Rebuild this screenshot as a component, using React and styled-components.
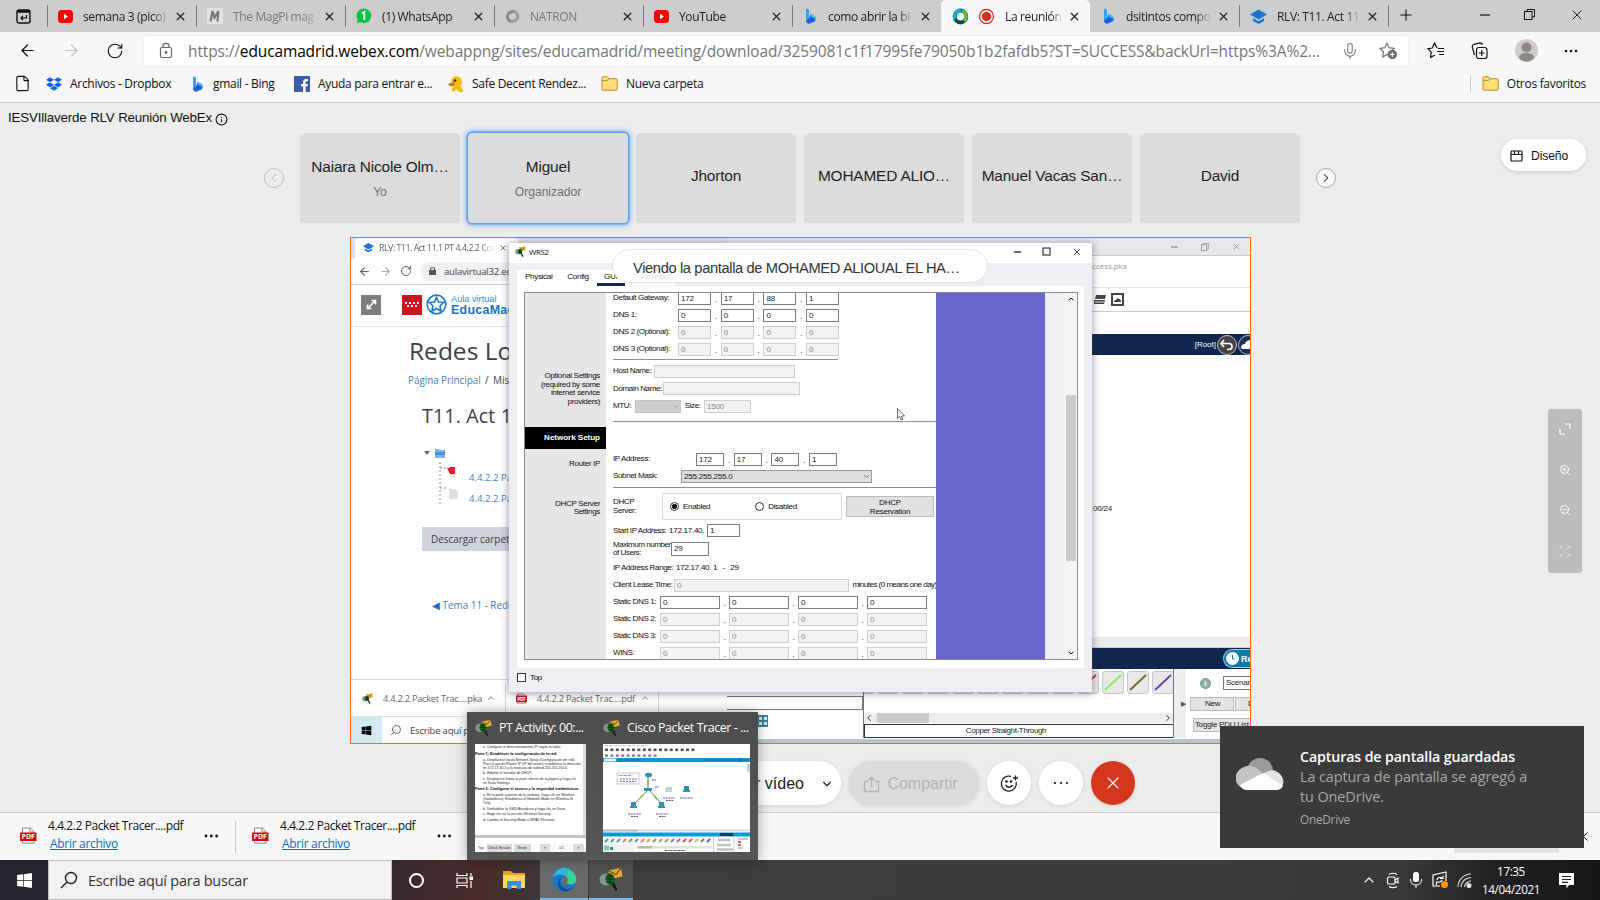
import React from "react";
import styled, { createGlobalStyle } from "styled-components";
import { FaDropbox, FaWindows, FaFacebookF } from "react-icons/fa";
import {
  ArrowLeft, ArrowRight, RotateCw, X, Plus, Mic, Search, ChevronDown, ChevronUp,
  ChevronLeft, ChevronRight, File, ZoomIn, ZoomOut, Info,
} from "lucide-react";

const ui = '"Open Sans", "Noto Sans", sans-serif';
const arial = '"Liberation Sans", Arial, sans-serif';

const Global = createGlobalStyle`
  * { box-sizing: border-box; }
  html, body { margin: 0; padding: 0; overflow: hidden; }
  body { width: 1600px; height: 900px; font-family: ${ui}; color: #111; }
  svg { display: block; flex: none; }
`;

const Screen = styled.div`
  position: relative;
  display: flex;
  flex-direction: column;
  width: 1600px;
  height: 900px;
  overflow: hidden;
  background: #ececec;
`;

/* ---------- browser frame ---------- */

const TabBar = styled.div`
  display: flex;
  height: 32px;
  background: #cdcdcd;
  flex: none;
`;
const TabMenu = styled.div`
  display: flex;
  width: 47px;
  align-items: center;
  justify-content: center;
`;
const TabBox = styled.div`
  display: flex;
  align-items: center;
  width: 149px;
  height: 32px;
  padding: 0 9px 0 10px;
  font-size: 12px;
  letter-spacing: -0.36px;
  color: ${(p) => (p.$dim ? "#777" : "#1b1b1b")};
  background: ${(p) => (p.$active ? "#f7f7f7" : "transparent")};
  border-radius: ${(p) => (p.$active ? "5px 5px 0 0" : "0")};
  border-left: 1px solid ${(p) => (p.$line ? "#777" : "transparent")};
  border-image: ${(p) => (p.$line ? "linear-gradient(transparent 19%, #777 19%, #777 82%, transparent 82%) 1" : "none")};
`;
const TabLabel = styled.span`
  flex: 1;
  margin: 0 5px 0 10px;
  white-space: nowrap;
  overflow: hidden;
  mask-image: linear-gradient(90deg, #000 80%, transparent 100%);
`;
const IconPair = styled.div`
  display: flex;
  gap: 9px;
`;
const WindowButtons = styled.div`
  display: flex;
  flex: 1;
  align-items: center;
  justify-content: space-between;
  padding: 0 15px 3px 8px;
  border-left: 1px solid transparent;
  border-image: linear-gradient(transparent 19%, #777 19%, #777 82%, transparent 82%) 1;
`;
const WindowControls = styled.div`
  display: flex;
  gap: 34px;
  align-items: center;
`;

const Toolbar = styled.div`
  display: flex;
  align-items: center;
  height: 37px;
  padding: 0 22px 0 18px;
  background: #f7f7f7;
  flex: none;
`;
const NavIcons = styled.div`
  display: flex;
  align-items: center;
  gap: 25px;
  width: 126px;
`;
const AddressBox = styled.div`
  display: flex;
  align-items: center;
  width: 1264px;
  height: 30px;
  padding: 0 10px 0 14px;
  background: #fff;
  border-radius: 4px;
  box-shadow: 0 0 3px #e2e2e2;
`;
const Url = styled.div`
  flex: 1;
  margin-left: 14px;
  font-size: 15.5px;
  letter-spacing: -0.13px;
  color: #767676;
  white-space: nowrap;
  b { font-weight: 400; color: #000; }
`;
const AddressIcons = styled.div`
  display: flex;
  gap: 20px;
  align-items: center;
`;
const ToolbarIcons = styled.div`
  display: flex;
  flex: 1;
  align-items: center;
  justify-content: space-between;
  padding-left: 19px;
`;

const Bookmarks = styled.div`
  display: flex;
  align-items: center;
  height: 34px;
  padding: 0 14px 4px 14px;
  background: #f7f7f7;
  border-bottom: 1px solid #cbcbcb;
  flex: none;
`;
const Bookmark = styled.div`
  display: flex;
  align-items: center;
  gap: 8px;
  width: ${(p) => p.$w}px;
  font-size: 12px;
  letter-spacing: -0.3px;
  white-space: nowrap;
`;
const OtherBookmarks = styled(Bookmark)`
  margin-left: auto;
  padding-left: 11px;
  border-left: 1px solid #c6c6c6;
`;

/* ---------- meeting page ---------- */

const Meeting = styled.main`
  display: flex;
  flex-direction: column;
  align-items: center;
  height: 709px;
  font-family: ${arial};
  flex: none;
`;
const MeetingTitle = styled.div`
  display: flex;
  align-items: center;
  gap: 3px;
  align-self: flex-start;
  height: 30px;
  padding: 0 0 1px 8px;
  font-size: 13.3px;
  letter-spacing: -0.15px;
  svg { margin-top: 3px; }
`;
const Strip = styled.div`
  display: flex;
  align-items: center;
  gap: 8px;
  height: 90px;
`;
const Card = styled.div`
  display: flex;
  flex-direction: column;
  align-items: center;
  justify-content: center;
  gap: 9px;
  width: 160px;
  height: 90px;
  padding-bottom: ${(p) => (p.$sub ? 0 : 5)}px;
  font-size: 15.4px;
  letter-spacing: -0.16px;
  color: #222;
  background: #dcdcdc;
  border-radius: 4px;
  box-shadow: ${(p) => (p.$active ? "0 0 0 1.5px #5aa2f8, 0 0 5px 2px #6eaefa" : "none")};
  small { font-size: 12.2px; letter-spacing: -0.05px; color: #6e6e6e; }
`;
const RoundArrow = styled.div`
  display: flex;
  align-items: center;
  justify-content: center;
  width: 20px;
  height: 20px;
  margin: 0 8px;
  border: 1px solid ${(p) => (p.$off ? "#c4c4c4" : "#aaa")};
  border-radius: 50%;
  color: ${(p) => (p.$off ? "#b4b4b4" : "#222")};
  background: ${(p) => (p.$off ? "transparent" : "#f8f8f8")};
`;
const LayoutButton = styled.div`
  position: absolute;
  left: 1501px;
  top: 139px;
  display: flex;
  align-items: center;
  gap: 8px;
  width: 85px;
  height: 32px;
  padding: 2px 0 0 9px;
  font: 12.2px ${arial};
  letter-spacing: -0.15px;
  background: #fff;
  border-radius: 16px;
  box-shadow: 0 1px 4px #ccc;
`;
const ZoomPanel = styled.div`
  position: absolute;
  left: 1548px;
  top: 409px;
  display: flex;
  flex-direction: column;
  align-items: center;
  justify-content: space-around;
  width: 34px;
  height: 164px;
  padding-bottom: 2px;
  color: #fff;
  background: #bcbcbc;
  border-radius: 3px;
`;

const Controls = styled.div`
  display: flex;
  gap: 8px;
  width: 670px;
  margin: 17px 0 0 466px;
  align-self: flex-start;
`;
const Pill = styled.div`
  display: flex;
  align-items: center;
  justify-content: ${(p) => (p.$end ? "flex-end" : "center")};
  gap: ${(p) => (p.$end ? 16 : 7)}px;
  width: ${(p) => p.$w}px;
  height: 44px;
  padding: ${(p) => (p.$w > 44 ? "2px 7px 0 0" : "0")};
  font-size: 16px;
  color: ${(p) => p.$fg || "#222"};
  background: ${(p) => p.$bg || "#fff"};
  border-radius: 22px;
  box-shadow: 0 1px 4px #d4d4d4;
`;

/* ---------- shared screen ---------- */

const SharedScreen = styled.div`
  position: relative;
  width: 901px;
  height: 507px;
  margin: 14px 0 0 350px;
  align-self: flex-start;
  border: 1px solid #f26a24;
  background: #b9c3d3;
  overflow: hidden;
  font-family: ${ui};
`;
const RemoteBrowser = styled.div`
  position: absolute;
  left: 0;
  top: 0;
  display: flex;
  flex-direction: column;
  width: 376px;
  height: 505px;
  background: #fefefe;
`;
const RTabs = styled.div`
  display: flex;
  height: 21px;
  background: #dee1e7;
`;
const RTab = styled.div`
  display: flex;
  align-items: center;
  gap: 5px;
  width: 163px;
  margin-left: 4px;
  padding: 0 0 2px 8px;
  font-size: 8.8px;
  letter-spacing: -0.46px;
  color: #5f6368;
  background: #fff;
  white-space: nowrap;
  border-radius: 4px 4px 0 0;
`;
const RTabLabel = styled.span`
  width: 115px;
  overflow: hidden;
  mask-image: linear-gradient(90deg, #000 88%, transparent);
`;
const RBar = styled.div`
  display: flex;
  align-items: center;
  gap: 8px;
  height: 26px;
  padding: 0 0 1px 7px;
  color: #5c5f63;
  border-bottom: 1px solid #ccc;
`;
const RUrl = styled.div`
  display: flex;
  align-items: center;
  gap: 8px;
  height: 19px;
  flex: 1;
  padding-left: 9px;
  font-size: 9.6px;
  letter-spacing: -0.24px;
  color: #444;
  background: #eff1f4;
  border-radius: 10px 0 0 10px;
`;
const RHeader = styled.div`
  display: flex;
  align-items: center;
  height: 42px;
  padding: 0 0 2px 10px;
  border-bottom: 1px solid #e2e2e2;
`;
const Expand = styled.div`
  display: flex;
  align-items: center;
  justify-content: center;
  width: 20px;
  height: 20px;
  margin-right: 21px;
  background: #7f7c81;
`;
const RedFlag = styled.div`
  display: flex;
  align-items: center;
  justify-content: center;
  width: 20px;
  height: 20px;
  margin-right: 4px;
  background: #cf1020;
`;
const Brand = styled.div`
  margin-left: 4px;
  font-family: ${arial};
  font-size: 9.2px;
  line-height: 11px;
  color: #3a8ad2;
  b { display: block; font-size: 12.4px; color: #1d70c2; font-weight: 900; letter-spacing: 0.3px; }
`;
const RPage = styled.div`
  display: flex;
  flex-direction: column;
  flex: 1;
  color: #3d4044;
  white-space: nowrap;
  h1 { margin: 7px 0 0 58px; font-size: 24.5px; line-height: 34px; font-weight: 400; }
  h2 { margin: 13px 0 0 71px; font-size: 19.5px; line-height: 28px; font-weight: 400; letter-spacing: 0.2px; }
`;
const Crumbs = styled.div`
  margin: 3px 0 0 57px;
  font-size: 9.9px;
  line-height: 18px;
  word-spacing: -0.4px;
  span { color: #4a7fb9; }
`;
const Tree = styled.div`
  display: grid;
  grid-template-columns: 46px 1fr;
  align-items: center;
  height: 66px;
  margin: 14px 0 0 72px;
  font-size: 9.6px;
  color: #4a7fb9;
`;
const TreeLinks = styled.div`
  display: grid;
  gap: 7px;
  line-height: 14px;
  padding-top: 22px;
`;
const Descargar = styled.div`
  height: 24px;
  width: 120px;
  margin: 17px 0 0 71px;
  padding-left: 9px;
  font-size: 9.9px;
  line-height: 24px;
  background: #ced3dd;
`;
const Prev = styled.div`
  margin: 46px 0 0 81px;
  font-size: 9.9px;
  line-height: 16px;
  color: #4a7fb9;
  i { font-style: normal; color: #1270c8; }
`;
const RDownloads = styled.div`
  display: flex;
  align-items: center;
  height: 37px;
  font-size: 9.2px;
  letter-spacing: -0.22px;
  color: #666;
  white-space: nowrap;
  border-top: 1px solid #d9d9d9;
`;
const RDownload = styled.div`
  display: flex;
  align-items: center;
  gap: 10px;
  width: ${(p) => p.$w}px;
  height: 28px;
  padding-left: ${(p) => p.$pl}px;
  border-right: 1px solid #d4d4d4;
  span { width: 93px; }
`;
const RTaskbar = styled.div`
  display: flex;
  align-items: center;
  height: 27px;
  gap: 8px;
  font-size: 9.6px;
  letter-spacing: -0.25px;
  color: #444;
  border-top: 1px solid #ddd;
  background: #fdfdfd;
`;
const FlippedSearch = styled(Search)`
  transform: scaleX(-1);
`;
const RStart = styled.div`
  display: flex;
  align-items: center;
  justify-content: center;
  width: 31px;
  height: 26px;
  color: #000;
  background: #d3e8f2;
`;

/* packet tracer window */
const Tracer = styled.div`
  position: absolute;
  left: 376px;
  top: 0;
  display: flex;
  flex-direction: column;
  width: 524px;
  height: 501px;
  background: #fefefe;
  font: 8px ${arial};
`;
const TRow = styled.div`
  display: flex;
  align-items: center;
  justify-content: flex-end;
  height: ${(p) => p.$h}px;
  padding-right: ${(p) => p.$pr || 0}px;
  gap: ${(p) => p.$gap || 0}px;
  color: ${(p) => p.$fg || "#333"};
  background: ${(p) => p.$bg || "#fefefe"};
  border-bottom: ${(p) => (p.$line ? "1px solid #c9c9c9" : "0")};
  flex: none;
`;
const TFile = styled.div`
  height: 32px;
  padding: 4px 0 0 361px;
  font: 8px ${ui};
  letter-spacing: -0.1px;
  color: #999;
  border-bottom: 1px solid #e2e2e2;
`;
const TCanvas = styled.div`
  height: 282px;
  padding: 149px 0 0 366px;
  color: #222;
  letter-spacing: -0.2px;
`;
const RealTime = styled.div`
  display: flex;
  align-items: center;
  gap: 2px;
  width: 28px;
  height: 19px;
  padding-left: 2px;
  overflow: hidden;
  font-weight: 700;
  font-size: 9px;
  color: #fff;
  background: #0d7cab;
  border: 1px solid #9bd0e6;
  border-right: 0;
  border-radius: 10px 0 0 10px;
`;
const TBottom = styled.div`
  display: flex;
  height: 69px;
  background: #f2f2f4;
  flex: none;
`;
const DeviceCol = styled.div`
  display: flex;
  flex-direction: column;
  width: 137px;
  border-right: 1px solid #777;
  background: #fff;
`;
const DeviceBox = styled.div`
  height: 14px;
  margin-top: 27px;
  border: 1px solid #777;
  border-left: 0;
`;
const TealTile = styled.div`
  display: grid;
  grid-template-columns: 3px 3px;
  gap: 2px;
  align-content: center;
  justify-content: center;
  width: 11px;
  height: 12px;
  margin: 5px 0 0 30px;
  background: #3b8596;
  i { width: 3px; height: 3px; background: #d7eef2; }
`;
const CableCol = styled.div`
  display: flex;
  flex-direction: column;
  width: 310px;
  background: #fff;
  border-right: 1px solid #777;
`;
const Cables = styled.div`
  display: flex;
  gap: 3px;
  height: 44px;
  padding-top: 2px;
  overflow: hidden;
  > :first-child { margin-left: -12px; }
`;
const Cable = styled.div`
  width: 22px;
  height: 23px;
  flex: none;
  border: 1px solid #c6c6c6;
  border-radius: 3px;
  background: #e8e8ea;
`;
const CableScroll = styled.div`
  display: flex;
  align-items: center;
  justify-content: space-between;
  height: 10px;
  margin-top: 1px;
  background: #ededee;
`;
const Thumb = styled.div`
  width: 52px;
  height: 10px;
  background: #c9c9cb;
  margin-right: auto;
  margin-left: 3px;
`;
const CableName = styled.div`
  height: 14px;
  margin-top: 1px;
  line-height: 12px;
  text-align: center;
  letter-spacing: -0.35px;
  padding-right: 26px;
  color: #222;
  border: 1px solid #333;
  border-right: 0;
`;
const Splitter = styled.div`
  display: flex;
  align-items: center;
  justify-content: flex-end;
  width: 12px;
  font-size: 7px;
  color: #555;
  background: #eee;
`;
const Scenario = styled.div`
  flex: 1;
  display: flex;
  flex-direction: column;
  gap: 7px;
  padding: 7px 0 0 4px;
  overflow: hidden;
  background: #fff;
  white-space: nowrap;
  letter-spacing: -0.25px;
`;
const ScenRow = styled.div`
  display: flex;
  align-items: center;
  gap: ${(p) => p.$gap || 1}px;
  padding-left: ${(p) => p.$pl || 0}px;
`;
const ScenButton = styled.div`
  width: ${(p) => p.$w}px;
  height: 14px;
  line-height: 12px;
  padding-left: ${(p) => p.$pl}px;
  flex: none;
  color: #222;
  background: ${(p) => p.$bg || "#e4e4e6"};
  border: 1px solid ${(p) => (p.$bg ? "#777" : "#bbb")};
`;

/* router window */
const Router = styled.div`
  position: absolute;
  left: 158px;
  top: 5px;
  display: flex;
  flex-direction: column;
  width: 583px;
  height: 449px;
  background: #f0eef2;
  box-shadow: 0 1px 7px 1px rgba(60, 60, 80, 0.45);
  font: 8.1px ${arial};
  letter-spacing: -0.42px;
`;
const RouterTitle = styled.div`
  display: flex;
  align-items: center;
  gap: 3px;
  height: 20px;
  padding: 0 10px 3px 6px;
  background: #fff;
  font-family: ${ui};
  font-size: 8px;
`;
const RouterButtons = styled.div`
  display: flex;
  align-items: center;
  gap: 21px;
  margin-left: auto;
`;
const RouterTabs = styled.div`
  display: flex;
  align-items: flex-end;
  gap: 15px;
  width: 158px;
  height: 16px;
  margin: 7px 0 0 8px;
  padding-left: 8px;
  background: #fff;
  line-height: 14px;
  letter-spacing: -0.35px;
  span { height: 16px; }
`;
const GuiTab = styled.span`
  width: 28px;
  margin-left: -7px;
  text-align: center;
  border-bottom: 3px solid #14264f;
`;
const RouterPanel = styled.div`
  display: flex;
  height: 382px;
  margin: 0 8px;
  padding: 6px 6px 8px 7px;
  background: #fff;
`;
const GuiFrame = styled.div`
  display: flex;
  width: 554px;
  height: 368px;
  border: 1px solid #8d8d90;
  overflow: hidden;
`;
const Side = styled.div`
  width: 81px;
  text-align: right;
  line-height: 8.7px;
  letter-spacing: -0.36px;
  background: #e6e6e9;
  flex: none;
`;
const SideNote = styled.div`
  padding: 0 6px 0 0;
  margin-top: ${(p) => p.$mt}px;
  white-space: pre-line;
`;
const SideBand = styled.div`
  height: 22px;
  margin-top: 20px;
  padding-right: 6px;
  font-weight: 700;
  line-height: 22px;
  letter-spacing: -0.06px;
  color: #fff;
  background: #000;
`;
const Form = styled.div`
  width: 330px;
  margin-top: -3px;
  padding-left: 7px;
  background: #fefefe;
  flex: none;
  white-space: nowrap;
`;
const Purple = styled.div`
  width: 109px;
  background: #6866cc;
  flex: none;
`;
const Gutter = styled.div`
  flex: 1;
  background: #f0eef0;
`;
const ScrollCol = styled.div`
  display: flex;
  flex-direction: column;
  align-items: center;
  width: 13px;
  padding: 2px 0;
  background: #f4f3f5;
  i { width: 10px; height: 166px; margin: 92px 0 auto 0; background: #cbcbcd; }
`;
const Row = styled.div`
  display: flex;
  align-items: center;
  height: ${(p) => p.$h || 17}px;
`;
const Label = styled.div`
  width: ${(p) => p.$w}px;
  flex: none;
  line-height: 8.5px;
  white-space: pre;
  letter-spacing: ${(p) => p.$ls || -0.42}px;
`;
const Field = styled.div`
  width: ${(p) => p.$w}px;
  height: ${(p) => p.$h || 13}px;
  padding-left: 2px;
  line-height: 11px;
  flex: none;
  letter-spacing: -0.25px;
  color: ${(p) => (p.$off ? "#8a8a8a" : "#222")};
  background: ${(p) => (p.$off ? "#f2f1f3" : "#fff")};
  border: 1px solid ${(p) => (p.$off ? "#cfcfd1" : "#7b7b7e")};
`;
const Dot = styled.div`
  width: ${(p) => p.$w}px;
  padding-top: 2px;
  text-align: center;
`;
const Select = styled(Field)`
  display: flex;
  align-items: center;
  justify-content: space-between;
  background: ${(p) => (p.$off ? "#cdcdd0" : "#dededf")};
  border-color: ${(p) => (p.$off ? "#c4c4c6" : "#999")};
`;
const Rule = styled.div`
  width: ${(p) => p.$w}px;
  height: 1px;
  margin: ${(p) => p.$m};
  background: #8f8f91;
`;
const RadioBox = styled.div`
  display: flex;
  align-items: center;
  gap: 4px;
  width: 180px;
  height: 27px;
  padding-left: 7px;
  margin-right: 4px;
  border: 1px solid #dcdcdc;
  letter-spacing: -0.36px;
`;
const Radio = styled.div`
  width: 9px;
  height: 9px;
  margin-left: ${(p) => p.$ml || 0}px;
  border: 1px solid #333;
  border-radius: 50%;
  background: ${(p) => (p.$on ? "radial-gradient(#111 0 2.2px, #fff 3px)" : "#fff")};
`;
const Reserve = styled.div`
  width: 88px;
  height: 21px;
  text-align: center;
  line-height: 9px;
  padding-top: 1px;
  letter-spacing: -0.26px;
  border: 1px solid #bbb;
  background: #e1e1e3;
`;
const RouterFoot = styled.div`
  display: flex;
  align-items: center;
  gap: 4px;
  height: 24px;
  padding: 0 0 6px 8px;
  i { width: 9px; height: 9px; border: 1px solid #333; background: #fff; }
`;
const Viewing = styled.div`
  position: absolute;
  left: 261px;
  top: 11px;
  width: 376px;
  height: 34px;
  padding-left: 20px;
  font: 14.7px/36px ${arial};
  letter-spacing: -0.37px;
  color: #333;
  white-space: nowrap;
  background: rgba(255, 255, 255, 0.88);
  border: 1px solid #e2e2e2;
  border-radius: 17px;
`;
const Pointer = styled.div`
  position: absolute;
  left: 546px;
  top: 170px;
`;

/* ---------- downloads and taskbar ---------- */

const Downloads = styled.div`
  display: flex;
  align-items: center;
  height: 48px;
  background: #f7f7f7;
  border-top: 1px solid #c9c9c9;
  flex: none;
`;
const Download = styled.div`
  display: flex;
  align-items: center;
  width: ${(p) => (p.$line ? 236 : 232)}px;
  height: 32px;
  padding: 0 16px 2px ${(p) => (p.$line ? 20 : 16)}px;
  border-right: ${(p) => (p.$line ? "1px solid #c6c6c6" : "0")};
`;
const DownloadText = styled.div`
  flex: 1;
  margin: -1px 0 0 11px;
  font-size: 12px;
  line-height: 18px;
  letter-spacing: -0.42px;
  white-space: nowrap;
  a { display: block; margin-left: 2px; letter-spacing: -0.3px; color: #1068bf; text-decoration: underline; }
`;
const ShowAll = styled.div`
  width: 105px;
  height: 32px;
  margin-left: auto;
  background: #e2e2e2;
`;
const CloseCell = styled.div`
  padding: 0 9px 0 17px;
`;
const Taskbar = styled.div`
  display: flex;
  height: 40px;
  color: #fff;
  background: linear-gradient(90deg, #262330 0, #262330 48px, #38292e 392px, #4b2b2b 480px, #3f3536 530px, #3d3d3d 640px, #3b3c3e 1100px, #39393b 1400px, #202022 1500px, #161617 1600px);
  flex: none;
`;
const TaskCell = styled.div`
  display: flex;
  align-items: center;
  justify-content: center;
  width: ${(p) => p.$w}px;
  height: 40px;
  background: ${(p) => p.$bg || "transparent"};
  border-bottom: ${(p) => (p.$bg ? "2px solid #76b9ed" : "0")};
  margin-right: ${(p) => p.$mr || 0}px;
`;
const SearchBox = styled.div`
  display: flex;
  align-items: center;
  gap: 10px;
  width: 344px;
  padding-left: 11px;
  font-size: 14.5px;
  letter-spacing: -0.25px;
  color: #333;
  background: #f1f1f1;
  border: 1px solid #bbb;
`;
const Tray = styled.div`
  display: flex;
  align-items: center;
  gap: 8px;
  margin-left: auto;
  padding-right: 25px;
`;
const Clock = styled.div`
  width: 62px;
  margin: 0 8px 0 0;
  text-align: center;
  font-size: 11.7px;
  line-height: 18px;
  letter-spacing: -0.4px;
`;

const Previews = styled.div`
  position: absolute;
  left: 467px;
  top: 712px;
  display: flex;
  gap: 17px;
  width: 291px;
  height: 148px;
  padding: 0 8px;
  background: linear-gradient(#4d4d4d, #565656);
  box-shadow: 0 0 12px rgba(0, 0, 0, 0.35);
`;
const Preview = styled.div`
  width: ${(p) => p.$w}px;
`;
const PreviewTitle = styled.div`
  display: flex;
  align-items: center;
  gap: 7px;
  height: 32px;
  padding-bottom: 1px;
  font-size: 12.5px;
  letter-spacing: -0.45px;
  color: #fff;
  white-space: nowrap;
`;
const ActivityDoc = styled.div`
  display: flex;
  flex-direction: column;
  width: 111px;
  height: 108px;
  overflow: hidden;
  background: #fff;
  font: 3.5px/4px ${arial};
  color: #222;
`;
const DocBody = styled.div`
  height: 91px;
  padding-top: 1px;
  overflow: hidden;
  border-right: 3px solid #dcdcdc;
  p { margin: 0 0 1.6px 8px; width: 98px; }
  b { display: block; margin: 2.5px 0 2px 0; font-size: 3.8px; color: #000; }
`;
const DocFoot = styled.div`
  display: flex;
  gap: 2px;
  align-items: center;
  height: 17px;
  padding: 6px 2px 1px;
  border-top: 3px solid #c4c4c4;
  white-space: nowrap;
`;
const DocButton = styled.span`
  width: ${(p) => p.$w}px;
  height: 8px;
  text-align: center;
  line-height: 8px;
  background: ${(p) => p.$bg || "#dcdcdc"};
  margin-left: ${(p) => p.$ml || 0}px;
`;

const Toast = styled.div`
  position: absolute;
  left: 1220px;
  top: 726px;
  display: flex;
  gap: 16px;
  width: 364px;
  height: 122px;
  padding: 20px 0 0 16px;
  background: #3a3a3a;
  color: #a9a9a9;
`;
const ToastText = styled.div`
  margin-top: 1px;
  font-size: 14.4px;
  line-height: 20px;
  letter-spacing: -0.07px;
  white-space: pre-line;
  b { display: block; font-weight: 600; font-size: 14.2px; letter-spacing: -0.11px; color: #fff; }
  small { display: block; margin-top: 3px; font-size: 11.8px; line-height: 18px; letter-spacing: -0.25px; }
`;
const ToastCloud = styled.div`
  padding-top: 12px;
`;

/* ---------- icons ---------- */

const YouTube = () => (
  <svg width="15" height="15" viewBox="0 0 15 15"><rect y="1" width="15" height="13" rx="3.500" fill="#f00" /><path d="M6 4.800v5.500l4-2.800z" fill="#fff" /></svg>
);
const Bing = () => (
  <svg width="15" height="16" viewBox="0 0 15 16"><path d="M3 .5l3 1v9.500l-3 3z" fill="#2aa7f5" /><path d="M3 12.500l3-2 1.500-4 3.500 1.500a3.500 3.500 0 0 1 .5 5.500L7 15.500a3 3 0 0 1-4-3z" fill="#1b62e0" /><path d="M6.800 5.500l4.500 2a3 3 0 0 1 1.300 3.500L8.500 9z" fill="#33c1f4" /></svg>
);
const WhatsAppTab = () => (
  <svg width="16" height="16" viewBox="0 0 16 16"><path d="M8 .5a7.300 7.300 0 1 1-3.600 13.700L.8 15.300l1-3.600A7.300 7.300 0 0 1 8 .5z" fill="#0cc143" /><path d="M6 5.500L8.300 4v8" stroke="#fff" strokeWidth="1.800" fill="none" /></svg>
);
const MagPi = () => (
  <svg width="16" height="16" viewBox="0 0 16 16"><rect width="16" height="16" fill="#e3e3e3" /><path d="M3.500 13.500L5.500 3l2 6.500L11.500 3l-1 10.500" stroke="#777" strokeWidth="2.200" fill="none" /></svg>
);
const Natron = () => (
  <svg width="15" height="15" viewBox="0 0 15 15" fill="none" stroke="#8b8b8b" strokeWidth="3"><path d="M6.500 12.500A5 5 0 0 1 4.500 3.500L9 1.800" /><path d="M8.500 2.500a5 5 0 0 1 2 9L6 13.200" stroke="#9d9d9d" /></svg>
);
const WebexMark = () => (
  <svg width="17" height="17" viewBox="0 0 17 17"><ellipse cx="8.500" cy="8.500" rx="5.700" ry="6" fill="#fff" stroke="#074d48" strokeWidth="4" /><path d="M3 11A6 6.200 0 0 1 9 2.300" stroke="#12b0e6" strokeWidth="3.400" fill="none" /><path d="M10 2.500a6 6.200 0 0 1 2 10.500" stroke="#64bb46" strokeWidth="3.400" fill="none" /></svg>
);
const Recording = () => (
  <svg width="17" height="17" viewBox="0 0 17 17"><circle cx="8.500" cy="8.500" r="7" fill="#fff" stroke="#d93025" strokeWidth="1.300" /><circle cx="8.500" cy="8.500" r="4.700" fill="#d93025" /></svg>
);
const Cap = ({ size = 17 }) => (
  <svg width={size} height={size} viewBox="0 0 17 17" fill="#1976d2"><path d="M8.500 1.500L17 6.500l-8.500 5L0 6.500z" /><path d="M3 10l5.500 3.200L14 10v3l-5.500 3L3 13z" /></svg>
);
const Folder = () => (
  <svg width="17" height="15" viewBox="0 0 17 15"><path d="M1 2q0-1.300 1.300-1.300h4l1.700 2h7q1.200 0 1.200 1.200v9q0 1.300-1.200 1.300H2.200Q1 14.200 1 13z" fill="#ffde7d" stroke="#b98d17" /><path d="M1 4.500h5l2-1.800" stroke="#b98d17" fill="none" /></svg>
);
const Duck = () => (
  <svg width="17" height="16" viewBox="0 0 17 16"><path d="M4.500 5.500C4 2 6.500.5 9.500.5s5.500 2 5.500 5.500c0 2.500-1.500 3-1.500 4.500 1.500 1 2.500 3 2.500 5.500h-4L9.500 13.500 6 15.800q-2-1.500-1-3.800l3-1.500z" fill="#f6b80c" /><path d="M1 8l5-2 2 2-1.500 2.500L2.500 10z" fill="#b9810f" /><circle cx="8" cy="4.500" r="1.300" fill="#222" /></svg>
);
const Pdf = () => (
  <svg width="17" height="17" viewBox="0 0 17 17"><path d="M2.500 16V1h8l3.500 3.500V16z" fill="#fff" stroke="#888" /><path d="M10 1v4h4" fill="none" stroke="#888" /><rect y="5.500" width="16.500" height="8.500" fill="#e3000f" /><text x="8.200" y="12.300" textAnchor="middle" fontFamily="Open Sans" fontWeight="700" fontSize="7" fill="#fff">PDF</text></svg>
);
const SmallPdf = () => (
  <svg width="11" height="11" viewBox="0 0 11 11"><path d="M1.500 10V1h6L9.500 3v7z" fill="#fff" stroke="#c55" /><rect y="2.500" width="11" height="6.500" fill="#c8102a" /><text x="5.500" y="7.500" textAnchor="middle" fontFamily="Open Sans" fontWeight="700" fontSize="4.800" fill="#fff">PDF</text></svg>
);
const TracerIcon = ({ size = 16 }) => (
  <svg width={size} height={size} viewBox="0 0 24 24"><ellipse cx="7" cy="12.500" rx="6.500" ry="6" fill="#8d908e" /><path d="M12 16l4.500 8 2-1-3.500-7.500z" fill="#151515" /><path d="M9 3.500L22 1l1.500 8.500-12 2.500z" fill="#e4ac35" /><path d="M9 3.500l8 4L22 1" stroke="#6b4b11" fill="none" strokeWidth="1.200" /><ellipse cx="11" cy="12" rx="4.500" ry="5.500" fill="#0a6d20" /><path d="M6.500 12h9M11 6.500v11M7.500 9h7M7.500 15h7" stroke="#04290b" strokeWidth="1" /></svg>
);
const CollectionIcon = () => (
  <svg width="17" height="18" viewBox="0 0 17 18" fill="none" stroke="#111" strokeWidth="1.200"><rect x="5.500" y="5.500" width="10.500" height="11" rx="2.500" /><path d="M3.500 13L1.200 5Q1 3 3 2.300L9 .8q2 0 2.600 2M10.700 8v6M7.700 11h6" /></svg>
);
const StarLines = () => (
  <svg width="18" height="17" viewBox="0 0 18 17" fill="none" stroke="#111" strokeWidth="1.200"><path d="M10 6L7.500 1 5.300 6 1 6.700l3.200 3.500L3.500 15.500 8 13M11 6.500h6M10 9.500h7M12 12.500h5" /></svg>
);
const StarPlus = () => (
  <svg width="19" height="18" viewBox="0 0 19 18"><path d="M8 1.200l2.100 4.500 5 .7-3.600 3.500.8 5L8 12.500 3.700 15l.8-5L1 6.400l5-.7z" fill="none" stroke="#767676" strokeWidth="1.200" /><circle cx="13.300" cy="12.500" r="4.700" fill="#6a6a6a" /><path d="M13.300 10v5M10.800 12.500h5" stroke="#fff" strokeWidth="1.200" /></svg>
);
const Avatar = () => (
  <svg width="23" height="23" viewBox="0 0 23 23"><circle cx="11.500" cy="11.500" r="11.500" fill="#cfcccb" /><circle cx="11.500" cy="8.500" r="5" fill="#8c8886" /><path d="M4 19q0-5 7.500-5t7.500 5q-3 3.500-7.500 3.500T4 19z" fill="#8c8886" /></svg>
);
const Dots = ({ color = "#111", gap = 5, r = 1.3 }) => (
  <svg width={gap * 2 + 4} height="4" viewBox={`0 0 ${gap * 2 + 4} 4`} fill={color}><circle cx="2" cy="2" r={r} /><circle cx={2 + gap} cy="2" r={r} /><circle cx={2 + gap * 2} cy="2" r={r} /></svg>
);
const Edge = () => (
  <svg width="25" height="25" viewBox="0 0 25 25"><circle cx="12.500" cy="12.500" r="12" fill="#1577cf" /><path d="M1 10A12 12 0 0 1 24.500 12c0 4-3 5.500-6 5.500-2.500 0-4-.8-3.500-2 2-5-2.500-8-7-8-3 0-5.500 1-7 2.500z" fill="#40cf94" /><path d="M1 10A12 12 0 0 1 17 1.500L15 10Q12 6.500 7 7.300 3 8 1 10z" fill="#30b8dc" /><path d="M10 10q-4 5 0 10 4 4 11 .5-3 4-8.500 4Q6 23 6 17q0-5 4-7z" fill="#0c4e9c" /><path d="M15 10.500q1.500 2-.5 5 0 2 4 2.500-7 3-9-2-1-4 2-6 2-1 3.500.5z" fill="#6b6b6b" /></svg>
);
const Explorer = () => (
  <svg width="22" height="20" viewBox="0 0 22 20"><path d="M0 1h8l2 2h12v15H0z" fill="#e3a51c" /><path d="M0 5h22v13H0z" fill="#fdd560" /><path d="M4 19v-8h14v8h-4.500v-3.500h-5V19z" fill="#3a8fd6" /></svg>
);
const Restore = ({ s = 11, c = "#111" }) => (
  <svg width={s} height={s} viewBox="0 0 11 11" fill="none" stroke={c}><rect x=".5" y="2.500" width="7.500" height="8" /><path d="M3 2.500v-2h7.500v7.500H8" /></svg>
);
const Dash = ({ w = 10, c = "#111" }) => (
  <svg width={w} height="2" viewBox={`0 0 ${w} 2`}><path d={`M0 1h${w}`} stroke={c} strokeWidth="1.200" /></svg>
);
const ShareIcon = () => (
  <svg width="17" height="17" viewBox="0 0 17 17" fill="none" stroke="#b4b4b4" strokeWidth="1.300"><path d="M5 5.500H1.500v10h14v-10H12M8.500 11V1.500M5.500 4.500l3-3 3 3" /></svg>
);
const OneDriveCloud = () => (
  <svg width="48" height="32" viewBox="0 0 48 32"><circle cx="24" cy="13" r="13" fill="#9b9b9b" /><path d="M11 31A11 11 0 0 1 6 10q10-6 19 4l13 17z" fill="#c3c3c3" /><path d="M27 16q10-8 18 1 5 7 0 13L26 17z" fill="#e3e3e3" /><path d="M4 27l23-12 20 13q-2 4-7 4H11q-5 0-7-5z" fill="#fff" /></svg>
);
const cableColors = ["#318ba0", "#318ba0", "#318ba0", "#e2762a", "#318ba0", "#318ba0", "#e2762a", "#e2a03a", "#777", "#888", "#e2762a", "#48a", "#d33", "#d33", "#d33", "#8d6", "#763", "#639"];
const Topology = () => (
  <svg width="147" height="108" viewBox="0 0 147 108">
    <rect width="147" height="108" fill="#fff" />
    <path d="M2 1.500h45" stroke="#bbb" strokeWidth=".8" strokeDasharray="3 1.500" />
    <g fill="#555">{Array.from({ length: 17 }, (_, i) => <rect key={i} x={2 + i * 5.4} y="4.500" width="3" height="2.600" />)}</g>
    <g fill="#687d92">{Array.from({ length: 10 }, (_, i) => <rect key={i} x={2 + i * 5.4} y="10.500" width="3" height="2.200" />)}</g>
    <rect y="14" width="147" height="4" fill="#0b9ad3" /><rect x="1" y="14.500" width="12" height="3" fill="#e8f6fb" /><path d="M102 16h43M16 16h22" stroke="#0b5f96" strokeWidth="1.200" strokeDasharray="4 1.500" />
    <rect x="14" y="29" width="22" height="11" fill="#fafafa" stroke="#aaa" strokeWidth=".6" /><path d="M16 31.500h12" stroke="#777" strokeWidth=".8" strokeDasharray="2 .5" /><path d="M17 35h17M17 37.500h16" stroke="#6b79a8" strokeWidth="1.200" strokeDasharray="2 1" />
    <path d="M45 33v11M45 46L31 60M46 46l13 14" stroke="#4d504e" strokeWidth=".8" /><path d="M45 36v5M41 50l-4 4M51 52l4 4" stroke="#67c83e" strokeWidth="1.500" />
    <g fill="#2f92ae"><ellipse cx="45.500" cy="31" rx="3.500" ry="2.300" /><path d="M41 44h8v3h-8zM28 58h5v4h1v2h-7v-2h1zM56 58h5v4h1v2h-7v-2h1zM81 42h5v4h1v2h-7v-2h1z" /><path d="M63 43h6v5h-7z" fill="#b4d7de" /></g>
    <path d="M25 70h13M28 72.500h7M53 70h12M56 72.500h7M60 54h12M63 56.500h8M77 54h13M49 36h4M52 43h4" stroke="#59628a" strokeWidth="1.200" strokeDasharray="2 .7" />
    <path d="M0 86.500h147" stroke="#ddd" strokeWidth="2" /><path d="M0 86.500h35M145.500 20v8" stroke="#bbb" strokeWidth="2" />
    <rect y="88.500" width="147" height="4" fill="#0b9ad3" /><rect x="117" y="89" width="13" height="3" fill="#133d5c" />
    {cableColors.map((c, i) => <g key={c + i}><rect x={1 + i * 6} y="94" width="5" height="5" fill="#ededed" /><path d={`M${2 + i * 6} 98l3-3`} stroke={c} strokeWidth="1.500" /></g>)}
    <rect x="0" y="100.500" width="31" height="7.500" fill="#f2f2f2" /><rect x="1" y="101.500" width="5" height="5" fill="#7fc9ba" /><rect x="7" y="103" width="3" height="3" fill="#318ba0" /><rect x="33" y="102" width="76" height="2.500" fill="#e2e2e2" /><rect x="35" y="102" width="14" height="2.500" fill="#bbb" /><path d="M62 106.500h20" stroke="#555" strokeDasharray="2 .6" />
    <path d="M110.500 93v15M131 93v15" stroke="#aaa" strokeWidth=".6" /><path d="M115 96h12M114 101h14M114 105.500h16" stroke="#c2c2c2" strokeWidth="2.400" /><path d="M135 95h10M135 104h5" stroke="#bbb" strokeWidth="1.500" /><path d="M135 98h3M135 101h3" stroke="#c33" strokeWidth="1.600" />
  </svg>
);

/* ---------- data ---------- */

const tabs = [
  { icon: <YouTube />, label: "semana 3 (pico)", line: true },
  { icon: <MagPi />, label: "The MagPi mag", line: true, dim: true },
  { icon: <WhatsAppTab />, label: "(1) WhatsApp", line: true },
  { icon: <Natron />, label: "NATRON", line: true, dim: true },
  { icon: <YouTube />, label: "YouTube", line: true },
  { icon: <Bing />, label: "como abrir la bi", line: true },
  { icon: <><WebexMark /><Recording /></>, label: "La reunión", active: true },
  { icon: <Bing />, label: "dsitintos compo" },
  { icon: <Cap />, label: "RLV: T11. Act 11", line: true },
];
const people = [
  ["Naiara Nicole Olm…", "Yo"], ["Miguel", "Organizador"], ["Jhorton"],
  ["MOHAMED ALIO…"], ["Manuel Vacas San…"], ["David"],
];
const zeros = ["0", "0", "0", "0"];
const cables = [0, 1, 2, 3, 4, 5, 6, 7, 8, "#d22", "#83ee63", "#7a6420", "#673ea6"];

const Octets = ({ values, w, dot, off }) =>
  values.map((v, i) => (
    <React.Fragment key={i}>
      {i > 0 && <Dot $w={dot}>.</Dot>}
      <Field $w={w} $off={off}>{v}</Field>
    </React.Fragment>
  ));

const RouterForm = () => (
  <Form>
    <Row><Label $w={65} $ls={-0.36}>Default Gateway:</Label><Octets values={["172", "17", "88", "1"]} w={33} dot={9.7} /></Row>
    <Row><Label $w={65}>DNS 1:</Label><Octets values={zeros} w={33} dot={9.7} /></Row>
    <Row><Label $w={65}>DNS 2 (Optional):</Label><Octets values={zeros} w={33} dot={9.7} off /></Row>
    <Row><Label $w={65}>DNS 3 (Optional):</Label><Octets values={zeros} w={33} dot={9.7} off /></Row>
    <Rule $w={225} $m="1px 0 3px" />
    <Row><Label $w={41}>Host Name:</Label><Field $w={141} $off /></Row>
    <Row $h={17.5}><Label $w={50}>Domain Name:</Label><Field $w={137} $off /></Row>
    <Row><Label $w={22}>MTU:</Label><Select $w={46} $off><span /><ChevronDown size={7} /></Select><Label $w={23}>{"  Size:"}</Label><Field $w={47} $off>1500</Field></Row>
    <Rule $w={323} $m="6px 0 29px" />
    <Row><Label $w={83}>IP Address:</Label><Octets values={["172", "17", "40", "1"]} w={28} dot={9.7} /></Row>
    <Row><Label $w={68}>Subnet Mask:</Label><Select $w={191}>255.255.255.0<ChevronDown size={9} color="#555" /></Select></Row>
    <Rule $w={323} $m="2px 0 3px" />
    <Row $h={32}>
      <Label $w={49}>{"DHCP\nServer:"}</Label>
      <RadioBox><Radio $on />Enabled<Radio $ml={41} />Disabled</RadioBox>
      <Reserve>DHCP<br />Reservation</Reserve>
    </Row>
    <Row $h={16.5}><Label $w={56}>Start IP Address:</Label><Label $w={38} $ls={-0.3}>172.17.40.</Label><Field $w={33}>1</Field></Row>
    <Row $h={20}><Label $w={58} $ls={-0.5}>{"Maximum number\nof Users:"}</Label><Field $w={38} $h={14}>29</Field></Row>
    <Row $h={18}><Label $w={63}>IP Address Range:</Label><Label $w={37} $ls={-0.3}>172.17.40.</Label><Label $w={30}>{"1   -   29"}</Label></Row>
    <Row><Label $w={61}>Client Lease Time:</Label><Field $w={175} $off>0</Field><Label $w={87} $ls={-0.55}>{"  minutes (0 means one day)"}</Label></Row>
    <Row $h={17}><Label $w={47}>Static DNS 1:</Label><Octets values={zeros} w={60} dot={9} /></Row>
    <Row><Label $w={47}>Static DNS 2:</Label><Octets values={zeros} w={60} dot={9} off /></Row>
    <Row><Label $w={47}>Static DNS 3:</Label><Octets values={zeros} w={60} dot={9} off /></Row>
    <Row><Label $w={47}>WINS:</Label><Octets values={zeros} w={60} dot={9} off /></Row>
  </Form>
);

const RouterWindow = () => (
  <Router>
    <RouterTitle>
      <TracerIcon size={11} />WRS2
      <RouterButtons><Dash w={7} /><svg width="9" height="9" viewBox="0 0 9 9"><rect x="1" y="1" width="7" height="7" fill="none" stroke="#111" /></svg><X size={10} strokeWidth={2} /></RouterButtons>
    </RouterTitle>
    <RouterTabs><span>Physical</span><span>Config</span><GuiTab>GUI</GuiTab><span>Attributes</span></RouterTabs>
    <RouterPanel>
      <GuiFrame>
        <Side>
          <SideNote $mt={79}>{"Optional Settings\n(required by some\ninternet service\nproviders)"}</SideNote>
          <SideBand>Network Setup</SideBand>
          <SideNote $mt={11}>Router IP</SideNote>
          <SideNote $mt={31}>{"DHCP Server\nSettings"}</SideNote>
        </Side>
        <RouterForm />
        <Purple />
        <Gutter />
        <ScrollCol><ChevronUp size={8} strokeWidth={3} /><i /><ChevronDown size={8} strokeWidth={3} /></ScrollCol>
      </GuiFrame>
    </RouterPanel>
    <RouterFoot><i />Top</RouterFoot>
  </Router>
);

const RemotePage = () => (
  <RemoteBrowser>
    <RTabs><RTab><Cap size={11} /><RTabLabel>RLV: T11. Act 11.1 PT 4.4.2.2 Conf</RTabLabel><X size={8} strokeWidth={2.5} /></RTab></RTabs>
    <RBar><ArrowLeft size={13} /><ArrowRight size={13} color="#aaa" /><RotateCw size={12} /><RUrl><svg width="7" height="8" viewBox="0 0 7 8"><rect y="3" width="7" height="5" fill="#555" /><path d="M1.500 3V1h4v2" stroke="#555" fill="none" /></svg>aulavirtual32.educa.madrid.org</RUrl></RBar>
    <RHeader>
      <Expand><svg width="11" height="11" viewBox="0 0 11 11"><path d="M2 9l7-7M5.500 1.500H9.500V5.500M1.500 5.500V9.500H5.500" stroke="#fff" strokeWidth="1.600" fill="none" /></svg></Expand>
      <RedFlag><svg width="16" height="8" viewBox="0 0 16 8"><path d="M1 2h14M3 5h11" stroke="#fff" strokeWidth="2" strokeDasharray="2 2" /></svg></RedFlag>
      <svg width="21" height="21" viewBox="0 0 21 21" fill="none" stroke="#2279cc" strokeWidth="1.700"><circle cx="10.500" cy="10.500" r="9.300" /><path d="M10.500 3.500l2 4.500 5 .5-3.500 3.500 1 5-4.500-2.500L6 17l1-5-3.500-3.500 5-.5z" /></svg>
      <Brand>Aula virtual<b>EducaMadrid</b></Brand>
    </RHeader>
    <RPage>
      <h1>Redes Locales</h1>
      <Crumbs><span>Página Principal</span>&nbsp; / &nbsp;Mis cursos</Crumbs>
      <h2>T11. Act 11.1</h2>
      <Tree>
        <svg width="45" height="66" viewBox="0 0 45 66"><path d="M1 7h6l-3 4z" fill="#666" /><path d="M12 5h4l1 1h5v8H12z" fill="#7fb0e6" /><path d="M12 8h10v3H12z" fill="#4f8fd8" /><path d="M17 18v43M17 24h6M17 44h6" stroke="#888" strokeDasharray="2 2" /><path d="M27 24h6v9h-6z" fill="#f0e2e4" /><path d="M24 24h2l1-1h5v7h-5z" fill="#d81f2c" /><path d="M26 45h6l3 3v7h-9z" fill="#dedee4" /></svg>
        <TreeLinks><span>4.4.2.2 Packet Tracer</span><span>4.4.2.2 Packet Tracer</span></TreeLinks>
      </Tree>
      <Descargar>Descargar carpeta</Descargar>
      <Prev><i>◀</i> Tema 11 - Redes</Prev>
    </RPage>
    <RDownloads>
      <RDownload $w={155} $pl={11}><TracerIcon size={11} /><span>4.4.2.2 Packet Trac....pka</span><ChevronUp size={10} /></RDownload>
      <RDownload $w={153} $pl={10}><SmallPdf /><span>4.4.2.2 Packet Trac....pdf</span><ChevronUp size={10} /></RDownload>
    </RDownloads>
    <RTaskbar><RStart><FaWindows size={11} /></RStart><FlippedSearch size={12} strokeWidth={1.6} />Escribe aquí para buscar</RTaskbar>
  </RemoteBrowser>
);

const TracerWindow = () => (
  <Tracer>
    <TRow $h={18} $bg="#e7e8ee" $pr={10} $gap={23} $line><Dash w={7} c="#888" /><Restore s={8} c="#888" /><X size={9} color="#888" /></TRow>
    <TFile>access.pka</TFile>
    <TRow $h={24} $pr={127} $gap={5} $line>
      <svg width="12" height="12" viewBox="0 0 12 12"><path d="M2 1h10l-1 4H1zM0 6h11l-1 4H0z" fill="#444" /><path d="M1 8h9" stroke="#ddd" /></svg>
      <svg width="13" height="13" viewBox="0 0 13 13"><rect x="1" y="1" width="11" height="11" fill="#fff" stroke="#444" strokeWidth="2" /><path d="M3 9q0-2 2-2 1-3 3-1 2 0 2 3z" fill="#444" /></svg>
    </TRow>
    <TRow $h={22} />
    <TRow $h={21} $bg="#10264d" $fg="#fff">
      [Root]
      <svg width="35" height="20" viewBox="0 0 35 20"><circle cx="11" cy="10" r="9.500" fill="#444" stroke="#bbb" /><path d="M8 5L5 8.500 8 12M5.500 8.500H13q3 0 3 3t-3 3h-2" stroke="#fff" strokeWidth="1.700" fill="none" /><circle cx="32" cy="10" r="9.500" fill="#14305b" stroke="#bbb" /><path d="M25 13q0-4 4-4 1-4 6-4v9h-9z" fill="#fff" /></svg>
    </TRow>
    <TCanvas>00/24</TCanvas>
    <TRow $h={11} $bg="#ececee" $line />
    <TRow $h={21} $bg="#10264d"><RealTime><svg width="13" height="13" viewBox="0 0 13 13"><circle cx="6.500" cy="6.500" r="6.500" fill="#fff" /><path d="M6.500 3v4h2" stroke="#0d7cab" fill="none" /></svg>Realtime</RealTime></TRow>
    <TBottom>
      <DeviceCol><DeviceBox /><TealTile><i /><i /><i /><i /></TealTile></DeviceCol>
      <CableCol>
        <Cables>{cables.map((c, i) => <Cable key={i}>{typeof c === "string" && <svg width="20" height="21" viewBox="0 0 20 21"><path d="M2 18L18 3" stroke={c} strokeWidth="1.800" /></svg>}</Cable>)}</Cables>
        <CableScroll><ChevronLeft size={10} /><Thumb /><ChevronRight size={10} /></CableScroll>
        <CableName>Copper Straight-Through</CableName>
      </CableCol>
      <Splitter>▶</Splitter>
      <Scenario>
        <ScenRow $pl={10} $gap={12}><svg width="11" height="11" viewBox="0 0 11 11"><circle cx="5.500" cy="5.500" r="5" fill="#8cb0ba" stroke="#71939c" /><path d="M5.500 3v5.500" stroke="#f2ed67" strokeWidth="1.800" /></svg><ScenButton $w={60} $pl={2} $bg="#fff">Scenario 0</ScenButton></ScenRow>
        <ScenRow><ScenButton $w={44} $pl={14}>New</ScenButton><ScenButton $w={44} $pl={12}>Delete</ScenButton></ScenRow>
        <ScenRow $pl={3}><ScenButton $w={90} $pl={1}>Toggle PDU List Window</ScenButton></ScenRow>
      </Scenario>
    </TBottom>
  </Tracer>
);

export default function App() {
  return (
    <Screen>
      <Global />
      <TabBar>
        <TabMenu><svg width="15" height="15" viewBox="0 0 15 15"><rect x="1" y="1" width="13" height="13" rx="2" fill="none" stroke="#111" strokeWidth="1.400" /><path d="M1 2.500h13" stroke="#111" strokeWidth="2.500" /><path d="M10.500 6v3H5M7 7L5 9l2 2" fill="none" stroke="#111" strokeWidth="1.200" /></svg></TabMenu>
        {tabs.map((t) => (
          <TabBox key={t.label} $line={t.line} $dim={t.dim} $active={t.active}>
            <IconPair>{t.icon}</IconPair><TabLabel>{t.label}</TabLabel><X size={13} strokeWidth={2.3} color="#222" />
          </TabBox>
        ))}
        <WindowButtons>
          <Plus size={18} strokeWidth={1.5} />
          <WindowControls><Dash /><Restore /><X size={16} strokeWidth={1.4} /></WindowControls>
        </WindowButtons>
      </TabBar>
      <Toolbar>
        <NavIcons><ArrowLeft size={19} strokeWidth={1.5} /><ArrowRight size={19} strokeWidth={1.5} color="#c3c3c3" /><RotateCw size={18} strokeWidth={1.5} /></NavIcons>
        <AddressBox>
          <svg width="16" height="17" viewBox="0 0 16 17" fill="none" stroke="#666" strokeWidth="1.200"><rect x="2.500" y="5.500" width="11" height="10" rx="1.500" /><path d="M5 5.500V4q0-2.700 3-2.700T11 4v1.500" /><circle cx="8" cy="10.500" r=".8" fill="#666" /></svg>
          <Url>https://<b>educamadrid.webex.com</b>/webappng/sites/educamadrid/meeting/download/3259081c1f17995fe79050b1b2fafdb5?ST=SUCCESS&amp;backUrl=https%3A%2...</Url>
          <AddressIcons><Mic size={18} strokeWidth={1.4} color="#767676" /><StarPlus /></AddressIcons>
        </AddressBox>
        <ToolbarIcons><StarLines /><CollectionIcon /><Avatar /><Dots /></ToolbarIcons>
      </Toolbar>
      <Bookmarks>
        <Bookmark $w={32}><File size={17} strokeWidth={1.6} /></Bookmark>
        <Bookmark $w={144}><FaDropbox size={16} color="#0f62fe" />Archivos - Dropbox</Bookmark>
        <Bookmark $w={104}><Bing />gmail - Bing</Bookmark>
        <Bookmark $w={153}><svg width="16" height="16" viewBox="0 0 16 16"><rect width="16" height="16" fill="#3b5ca8" /><FaFacebookF x="4" y="3" size={13} color="#fff" /></svg>Ayuda para entrar e...</Bookmark>
        <Bookmark $w={154}><Duck />Safe Decent Rendez...</Bookmark>
        <Bookmark $w={110}><Folder />Nueva carpeta</Bookmark>
        <OtherBookmarks><Folder />Otros favoritos</OtherBookmarks>
      </Bookmarks>

      <Meeting>
        <MeetingTitle>IESVIllaverde RLV Reunión WebEx<Info size={13} strokeWidth={2} /></MeetingTitle>
        <Strip>
          <RoundArrow $off><ChevronLeft size={14} strokeWidth={1.6} /></RoundArrow>
          {people.map(([name, sub], i) => <Card key={name} $active={i === 1} $sub={sub}>{name}{sub && <small>{sub}</small>}</Card>)}
          <RoundArrow><ChevronRight size={14} strokeWidth={1.8} /></RoundArrow>
        </Strip>
        <SharedScreen>
          <RemotePage />
          <TracerWindow />
          <RouterWindow />
          <Viewing>Viendo la pantalla de MOHAMED ALIOUAL EL HA…</Viewing>
          <Pointer><svg width="9" height="13" viewBox="0 0 9 13"><path d="M.5.500v10l2.300-2 1.500 3.500 1.500-.7L4.300 8H7.500z" fill="#fff" stroke="#444" strokeWidth=".8" /></svg></Pointer>
        </SharedScreen>
        <Controls>
          <Pill $w={375} $end>r vídeo<ChevronDown size={14} /></Pill>
          <Pill $w={130} $bg="#dcdcdc" $fg="#b4b4b4"><ShareIcon />Compartir</Pill>
          <Pill $w={44}><svg width="19" height="19" viewBox="0 0 19 19" fill="none" stroke="#222" strokeWidth="1.300"><path d="M11 2.400A7.500 7.500 0 1 0 16.200 8M5.500 11q3.500 4.500 7 0M13 4h5M15.500 1.500v5" /><circle cx="6.500" cy="7.500" r=".7" fill="#222" /><circle cx="11" cy="7.500" r=".7" fill="#222" /></svg></Pill>
          <Pill $w={44}><Dots gap={6} r={1.1} /></Pill>
          <Pill $w={44} $bg="#d4371c" $fg="#fff"><X size={20} strokeWidth={1.3} /></Pill>
        </Controls>
      </Meeting>

      <LayoutButton><svg width="13" height="12" viewBox="0 0 13 12" fill="none" stroke="#111" strokeWidth="1.200"><rect x="1" y="1" width="11" height="10" rx="1" /><path d="M1 4.500h11M4.500 1v3M8.500 1v3" /></svg>Diseño</LayoutButton>
      <ZoomPanel>
        <svg width="12" height="12" viewBox="0 0 12 12"><path d="M6 1h5v5M1 6v5h5" stroke="#fff" strokeWidth="1.200" fill="none" /></svg>
        <ZoomIn size={12} /><ZoomOut size={12} />
        <svg width="12" height="12" viewBox="0 0 12 12" stroke="#d4d4d4" fill="none"><path d="M1 4V1h3M1 1l3.500 3.500M8 1h3v3M11 1L7.500 4.500M1 8v3h3M1 11l3.500-3.500M8 11h3V8M11 11L7.500 7.500" /></svg>
      </ZoomPanel>

      <Downloads>
        {[true, false].map((line) => (
          <Download key={String(line)} $line={line}>
            <Pdf />
            <DownloadText>4.4.2.2 Packet Tracer....pdf<a>Abrir archivo</a></DownloadText>
            <Dots gap={5.3} r={1.4} />
          </Download>
        ))}
        <ShowAll /><CloseCell><X size={15} strokeWidth={1.6} /></CloseCell>
      </Downloads>

      <Taskbar>
        <TaskCell $w={48}><FaWindows size={17} /></TaskCell>
        <SearchBox><svg width="18" height="18" viewBox="0 0 18 18" fill="none" stroke="#222" strokeWidth="1.400"><circle cx="11" cy="7" r="5.500" /><path d="M7 11l-6 6" /></svg>Escribe aquí para buscar</SearchBox>
        <TaskCell $w={48}><svg width="17" height="17" viewBox="0 0 17 17"><circle cx="8.500" cy="8.500" r="6.500" fill="none" stroke="#fff" strokeWidth="2" /></svg></TaskCell>
        <TaskCell $w={48}><svg width="17" height="17" viewBox="0 0 17 17" fill="none" stroke="#fff" strokeWidth="1.200"><path d="M1 1v2.500h10V1M1 16v-2.500h10V16M1 6h10v5H1zM15 1v3M15 9v7" /><rect x="14" y="5" width="2.500" height="2.500" fill="#fff" /></svg></TaskCell>
        <TaskCell $w={52}><Explorer /></TaskCell>
        <TaskCell $w={48} $bg="#6a6a6a" $mr={1}><Edge /></TaskCell>
        <TaskCell $w={44} $bg="#515151"><TracerIcon size={24} /></TaskCell>
        <Tray>
          <ChevronUp size={16} strokeWidth={1.6} />
          <svg width="16" height="17" viewBox="0 0 16 17" fill="none" stroke="#fff" strokeWidth="1.100"><rect x="2.500" y="5" width="7.500" height="7" rx="1" /><path d="M10 8l3-2v5l-3-2M4 2.500q4-2.500 8 0M4 14.500q4 2.500 8 0" /></svg>
          <svg width="14" height="18" viewBox="0 0 14 18"><rect x="4" y="1" width="6" height="10" rx="2.500" fill="#fff" /><path d="M1.500 8q0 6 5.500 6t5.500-6M7 14v3" stroke="#fff" fill="none" /></svg>
          <svg width="18" height="18" viewBox="0 0 18 18" fill="none" stroke="#fff" strokeWidth="1.200"><path d="M9 15H2V4l13-3v9M6 9q1-4 5-2M12 4.500V7.500H9M11 9q-1 3-4.500 2M5.500 14v-3h2" /><circle cx="13.500" cy="13.500" r="3.500" fill="#ff9800" stroke="none" /></svg>
          <svg width="15" height="15" viewBox="0 0 15 15" fill="none" stroke="#ddd" strokeWidth="1.100"><path d="M1 14A13 13 0 0 1 14 1M4 14A10 10 0 0 1 14 4.500M7.500 14A6.500 6.500 0 0 1 14 8" /><circle cx="12" cy="12.500" r="2" fill="#fff" /></svg>
          <Clock>17:35<br />14/04/2021</Clock>
          <svg width="17" height="17" viewBox="0 0 17 17"><path d="M1 1h15v12h-5l-2.500 3.500V13H1z" fill="#fff" /><path d="M4 4.500h9M4 7.500h9M4 10.300h6" stroke="#222" strokeWidth="1.200" /></svg>
        </Tray>
      </Taskbar>

      <Previews>
        <Preview $w={111}>
          <PreviewTitle><TracerIcon size={17} />PT Activity: 00:...</PreviewTitle>
          <ActivityDoc>
            <DocBody>
              <p>a. Configure el direccionamiento IP según la tabla.</p>
              <b>Parte 1: Establecer la configuración de la red.</b>
              <p>a. Desplácese hasta Network Setup (Configuración de red). Para la opción Router IP (IP del router), establezca la dirección en 172.17.40.1 y la máscara de subred 255.255.255.0</p>
              <p>b. Habilite el servidor de DHCP.</p>
              <p>c. Desplácese hasta la parte inferior de la página y haga clic en Save Settings.</p>
              <b>Parte 2: Configurar el acceso y la seguridad inalámbricos</b>
              <p>a. En la parte superior de la ventana, haga clic en Wireless (Inalámbrico). Establezca el Network Mode en Wireless-N Only.</p>
              <p>b. Deshabilite la SSID Broadcast y haga clic en Save.</p>
              <p>c. Haga clic en la sección Wireless Security.</p>
              <p>d. Cambie el Security Mode a WPA2 Personal.</p>
            </DocBody>
            <DocFoot><DocButton $w={8} $bg="#fff">Top</DocButton><DocButton $w={26}>Check Results</DocButton><DocButton $w={18}>Reset</DocButton><DocButton $w={11} $ml={7}>&lt;</DocButton><DocButton $w={19} $bg="#f4fbfd">1/1</DocButton><DocButton $w={12}>&gt;</DocButton></DocFoot>
          </ActivityDoc>
        </Preview>
        <Preview $w={147}>
          <PreviewTitle><TracerIcon size={17} />Cisco Packet Tracer - ...</PreviewTitle>
          <Topology />
        </Preview>
      </Previews>

      <Toast>
        <ToastCloud><OneDriveCloud /></ToastCloud>
        <ToastText><b>Capturas de pantalla guardadas</b>{"La captura de pantalla se agregó a\ntu OneDrive."}<small>OneDrive</small></ToastText>
      </Toast>
    </Screen>
  );
}
